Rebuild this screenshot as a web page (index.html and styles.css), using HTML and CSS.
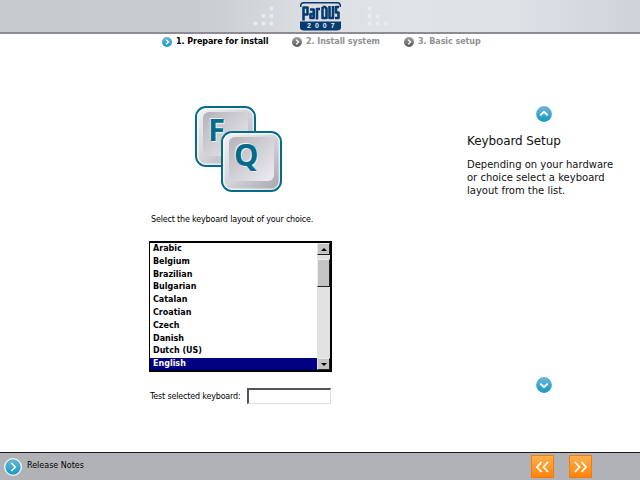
FILE: index.html
```html
<!DOCTYPE html>
<html lang="en">
<head>
<meta charset="utf-8">
<title>Pardus 2007</title>
<link rel="stylesheet" href="styles.css">
</head>
<body>
<svg width="0" height="0" class="defs" aria-hidden="true">
  <defs>
    <linearGradient id="blue" x1="0" y1="0" x2="0" y2="1"><stop offset="0" stop-color="#70b5d4"/><stop offset="1" stop-color="#159ac5"/></linearGradient>
    <linearGradient id="gray" x1="0" y1="0" x2="0" y2="1"><stop offset="0" stop-color="#a2a2a2"/><stop offset="1" stop-color="#555"/></linearGradient>
    <linearGradient id="edge" x1="0" y1="0" x2="1" y2="1"><stop offset="0" stop-color="#f4f4f7"/><stop offset=".5" stop-color="#d2d2d7"/><stop offset="1" stop-color="#a3a3a9"/></linearGradient>
    <linearGradient id="face" x1="0" y1="0" x2="1" y2="1"><stop offset="0" stop-color="#b2b2b8"/><stop offset=".55" stop-color="#d3d3d8"/><stop offset="1" stop-color="#ededf1"/></linearGradient>
    <symbol id="disc" viewBox="0 0 10 10"><circle cx="5" cy="5" r="5"/><path d="M4.1 2.6 6.5 5 4.1 7.4" fill="none" stroke="#fff" stroke-width="1.3"/></symbol>
  </defs>
</svg>
<div class="screen">
  <header class="top">
    <svg class="dots" width="22" height="22" viewBox="0 0 22 22"><g fill="#eaedf0"><circle cx="18.5" cy="2.500" r="2"/><circle cx="10.500" cy="10" r="2"/><circle cx="18.500" cy="10" r="2"/><circle cx="2.500" cy="17.500" r="2"/><circle cx="10.500" cy="17.500" r="2"/><circle cx="18.500" cy="17.500" r="2"/></g></svg>
    <div class="logo">
      <svg width="41" height="30" viewBox="0 0 41 30">
        <path d="M.7 5V3.500Q.7.700 4 .700H37Q40.300.700 40.300 3.500V5" fill="none" stroke="#073b70" stroke-width="1.500"/>
        <path d="M0 19.500H41V25.500Q41 28.500 37 28.500H4Q0 28.500 0 25.500Z" fill="#073b70"/>
        <g fill="none" stroke="#073b70" stroke-width="2.600" stroke-linejoin="round">
          <path d="M3.500 18.500V5.500H7.500V12.500H3.500"/>
          <path d="M10 7.500H13.700V16H10.500V12H13.500"/>
          <path d="M17 17.500V7H20"/>
          <path d="M22.500 5H25L26.500 6.500V16H22.500V5"/>
          <path d="M29.500 4V16H33V4"/>
          <path d="M39 5H36V10.500H38.500V16H35"/>
        </g>
      </svg>
      <span class="year">2007</span>
    </div>
    <svg class="dots flip" width="22" height="22" viewBox="0 0 22 22"><g fill="#eaedf0"><circle cx="18.5" cy="2.500" r="2"/><circle cx="10.500" cy="10" r="2"/><circle cx="18.500" cy="10" r="2"/><circle cx="2.500" cy="17.500" r="2"/><circle cx="10.500" cy="17.500" r="2"/><circle cx="18.500" cy="17.500" r="2"/></g></svg>
  </header>
  <nav class="steps">
    <div class="step active"><svg width="10" height="10" fill="url(#blue)"><use href="#disc"/></svg><span>1. Prepare for install</span></div>
    <div class="step"><svg width="10" height="10" fill="url(#gray)"><use href="#disc"/></svg><span>2. Install system</span></div>
    <div class="step"><svg width="10" height="10" fill="url(#gray)"><use href="#disc"/></svg><span>3. Basic setup</span></div>
  </nav>
  <main class="content">
    <section class="setup">
      <div class="keys">
        <div class="key"><svg width="61" height="61" viewBox="0 0 61 61"><rect x="1" y="1" width="59" height="59" rx="10" fill="url(#edge)" stroke="#046b8c" stroke-width="2"/><rect x="2.800" y="2.800" width="55.400" height="55.400" rx="8" fill="none" stroke="#fff" stroke-width="1.200" opacity=".85"/><rect x="8" y="6" width="45" height="44" rx="6" fill="url(#face)"/></svg><span>F</span></div>
        <div class="key front"><svg width="61" height="61" viewBox="0 0 61 61"><rect x="1" y="1" width="59" height="59" rx="10" fill="url(#edge)" stroke="#046b8c" stroke-width="2"/><rect x="2.800" y="2.800" width="55.400" height="55.400" rx="8" fill="none" stroke="#fff" stroke-width="1.200" opacity=".85"/><rect x="8" y="6" width="45" height="44" rx="6" fill="url(#face)"/></svg><span>Q</span></div>
      </div>
      <p class="prompt">Select the keyboard layout of your choice.</p>
      <div class="listbox">
        <ul class="layouts">
          <li>Arabic</li><li>Belgium</li><li>Brazilian</li><li>Bulgarian</li><li>Catalan</li><li>Croatian</li><li>Czech</li><li>Danish</li><li>Dutch (US)</li><li class="selected">English</li>
        </ul>
        <div class="scrollbar">
          <div class="arrow"><svg width="6" height="3"><path d="M0 3 3 0 6 3Z"/></svg></div>
          <div class="track"><div class="thumb"></div></div>
          <div class="arrow"><svg width="6" height="3"><path d="M0 0 3 3 6 0Z"/></svg></div>
        </div>
      </div>
      <div class="test"><label for="test">Test selected keyboard:</label><input id="test" type="text"></div>
    </section>
    <aside class="help">
      <svg class="nav-arrow" width="16" height="16" viewBox="0 0 16 16"><circle cx="8" cy="8" r="7.900" fill="url(#blue)"/><path d="M4.300 9.200 8 5.800 11.700 9.200" fill="none" stroke="#fff" stroke-width="1.900"/></svg>
      <h1>Keyboard Setup</h1>
      <p>Depending on your hardware<br>or choice select a keyboard<br>layout from the list.</p>
      <svg class="nav-arrow down" width="16" height="16" viewBox="0 0 16 16"><circle cx="8" cy="8" r="7.900" fill="url(#blue)"/><path d="M4.300 6.600 8 10 11.700 6.600" fill="none" stroke="#fff" stroke-width="1.900"/></svg>
    </aside>
  </main>
  <footer class="bottom">
    <svg width="18" height="18" viewBox="0 0 18 18"><circle cx="9" cy="9" r="8.300" fill="url(#blue)" stroke="#f3f8fa" stroke-width="1.300"/><path d="M7.300 5 11.300 9 7.300 13" fill="none" stroke="#fff" stroke-width="1.500"/></svg>
    <span class="notes">Release Notes</span>
    <div class="buttons">
      <button aria-label="Back"><svg width="15" height="12"><path d="M6.500 1 2 6 6.500 11M13 1 8.500 6 13 11" fill="none" stroke="#fff" stroke-width="1.800"/></svg></button>
      <button aria-label="Next"><svg width="15" height="12"><path d="M2 1 6.500 6 2 11M8.500 1 13 6 8.500 11" fill="none" stroke="#fff" stroke-width="1.800"/></svg></button>
    </div>
  </footer>
</div>
</body>
</html>
```
FILE: styles.css
```css
* { box-sizing: border-box; }
body { margin: 0; background: #fff; color: #000; font-family: "DejaVu Sans", Verdana, sans-serif; font-size: 8px; }
svg { display: block; flex: none; }
.defs { position: absolute; }
.screen { width: 640px; height: 480px; display: flex; flex-direction: column; overflow: hidden; }
.top { height: 34px; flex: none; display: flex; padding-left: 253px; border-bottom: 2px solid #8b8c94; background: linear-gradient(90deg, #c6cbce 0%, #c8cdd0 32%, #d9dde1 46%, #dfe4e9 62%, #dde2e7 80%, #ced3d9 100%); }
.dots { margin: 6px 25px 0 0; }
.dots.flip { margin: 6px 0 0 25px; transform: scaleX(-1); }
.logo { position: relative; width: 41px; padding-top: 2px; }
.year { position: absolute; left: 7px; top: 20px; font: bold 7px/11px "Liberation Sans", sans-serif; letter-spacing: 4px; color: #e4ecf4; }
.steps { height: 15px; flex: none; display: flex; padding-left: 162px; }
.step { display: flex; align-items: center; width: 112px; color: #929292; font-weight: bold; white-space: nowrap; letter-spacing: -.05px; }
.step span { margin-left: 4px; line-height: 15px; }
.step.active { width: 130px; color: #000; }
.content { flex: 1; display: flex; padding-left: 149px; }
.setup { width: 183px; margin-right: 135px; }
.keys { position: relative; height: 87px; margin: 57px 0 0 46px; }
.key { position: absolute; left: 0; top: 0; }
.key.front { left: 26px; top: 25px; }
.key span { position: absolute; left: 13px; top: 7px; font: bold 31px/32px "Noto Sans", sans-serif; color: #046b8c; text-shadow: 1px 1px 0 #eef2f5, -1px -1px 0 #eef2f5; }
.prompt { margin: 21px 0 0 2px; line-height: 12px; white-space: nowrap; letter-spacing: -.17px; }
.listbox { display: flex; height: 131px; margin-top: 15px; border: 2px solid #000; border-left-width: 1px; }
.layouts { flex: 1; margin: 0; padding: 0; list-style: none; font-weight: bold; }
.layouts li { height: 12.800px; padding-left: 3px; line-height: 12.800px; }
.layouts .selected { height: 12px; background: #000080; color: #fff; }
.scrollbar { width: 13px; display: flex; flex-direction: column; }
.arrow { height: 12px; display: grid; place-items: center; background: #c3c3c6; border: 1px solid #e8e8e8; border-right-color: #222; border-bottom-color: #222; }
.track { flex: 1; padding-top: 4px; background: #e1e1e1; }
.thumb { height: 28px; background: #c3c3c6; border: 1px solid #eee; border-right-color: #222; border-bottom-color: #222; }
.test { display: flex; align-items: center; justify-content: space-between; margin-top: 16px; padding: 0 1px; white-space: nowrap; letter-spacing: -.17px; }
.test input { width: 84px; height: 16px; padding: 0 2px; background: #fff; border: 2px solid #555; border-right: 1px solid #ddd; border-bottom: 1px solid #ddd; border-radius: 0; font: inherit; }
.help { display: flex; flex-direction: column; color: #111; white-space: nowrap; }
.nav-arrow { margin: 57px 0 0 69px; }
.nav-arrow.down { margin-top: 180px; }
.help h1 { margin: 11px 0 0; font-size: 12px; line-height: 16px; font-weight: normal; letter-spacing: -.1px; }
.help p { margin: 9px 0 0; font-size: 10px; line-height: 13px; }
.bottom { height: 28px; flex: none; display: flex; align-items: center; padding-left: 4px; border-top: 1px solid #1d1d1d; background: #b1b2b5; }
.notes { margin: -2px 0 0 5px; }
.buttons { display: flex; gap: 15px; margin: 0 48px 0 auto; }
.buttons button { width: 23px; height: 23px; padding: 0; display: grid; place-items: center; border: 1px solid #f57c0a; background: linear-gradient(#ffb04a, #ff830d); }
```
